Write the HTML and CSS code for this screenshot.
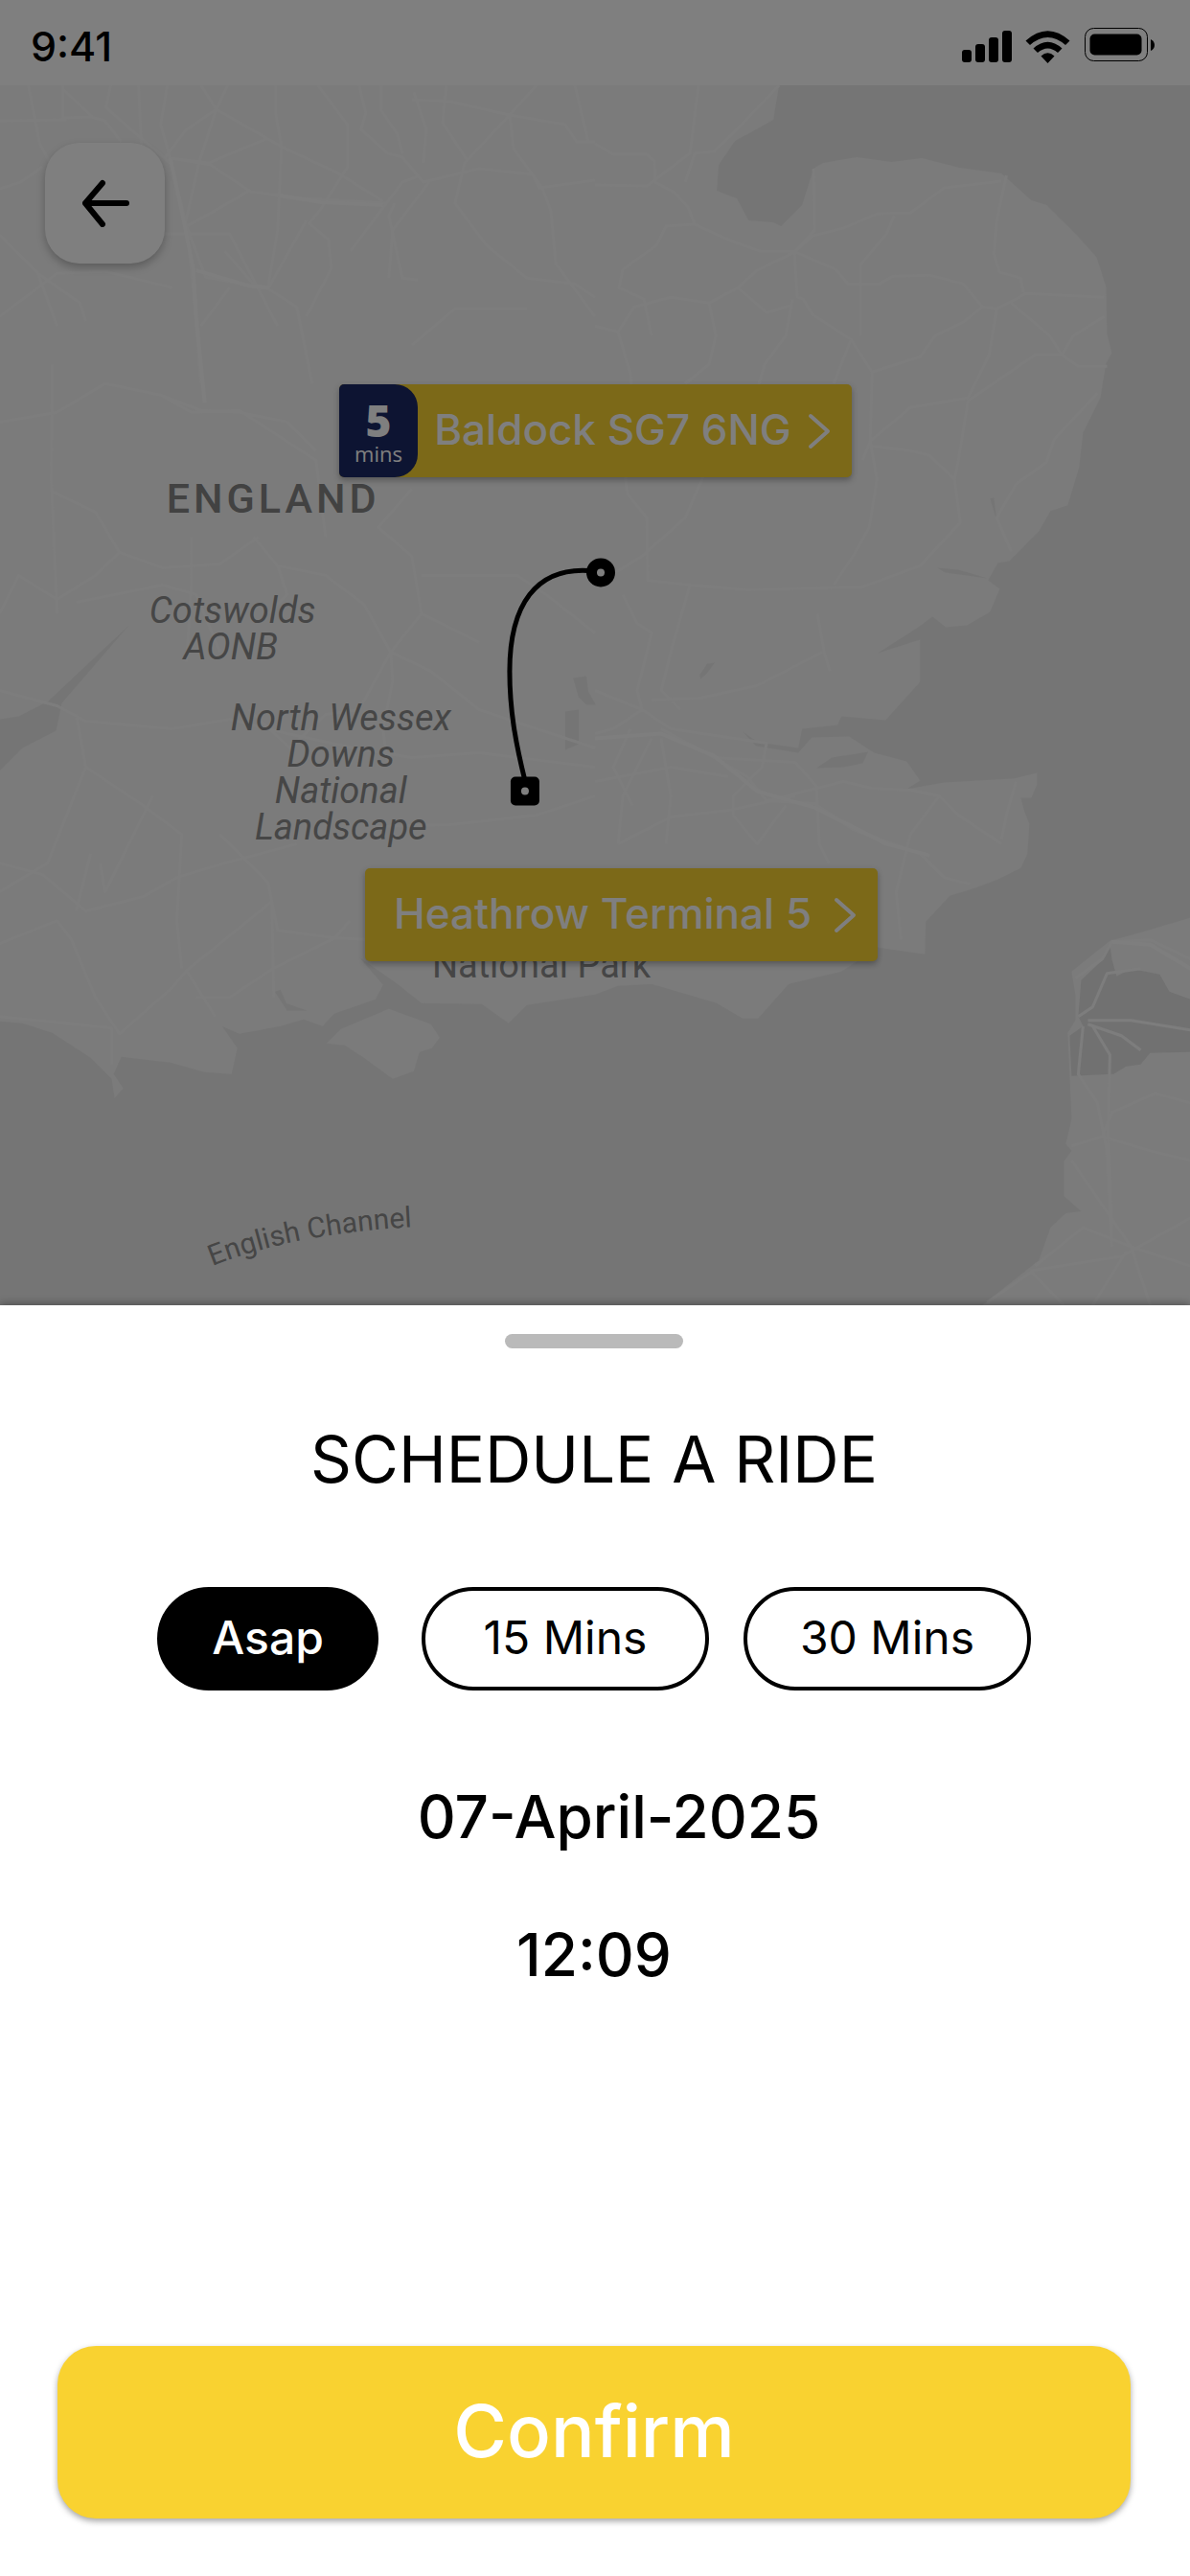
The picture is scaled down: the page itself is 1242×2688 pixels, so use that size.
FILE: index.html
```html
<!DOCTYPE html>
<html lang="en">
<head>
    <meta charset="utf-8">
    <meta name="viewport" content="width=device-width, initial-scale=1">
    <title>Schedule a ride</title>
    <link rel="stylesheet" href="styles.css">
</head>
<body>
    <div class="backdrop">
        <header class="status-bar">
            <span class="clock">9:41</span>
            <svg class="status-icons" viewBox="1005 28 202 40" aria-hidden="true">
                <rect x="1005" y="52" width="10" height="13" rx="3"/>
                <rect x="1019" y="46" width="10" height="19" rx="3"/>
                <rect x="1033" y="39" width="10" height="26" rx="3"/>
                <rect x="1047" y="32" width="10" height="33" rx="3"/>
                <path d="M1071.500 42.500Q1094.500 22 1117.500 42.500L1113 47Q1094.500 31 1076 47Z"/>
                <path d="M1079.500 50.500Q1094.500 37 1109.500 50.500L1105 55Q1094.500 46 1084 55Z"/>
                <path d="M1087.500 58.500Q1094.500 52 1101.500 58.500L1094.500 66Z"/>
                <rect class="battery-case" x="1133.500" y="29.500" width="65" height="34" rx="9"/>
                <rect x="1138.500" y="35.500" width="54" height="22" rx="5"/>
                <path d="M1202 41Q1206 43 1206 47T1202 53Z"/>
            </svg>
        </header>

        <main class="map">
            <svg class="map-canvas" viewBox="0 89 1242 1272" preserveAspectRatio="xMidYMid slice">
                <!-- land -->
                <path class="land" d="M0 89H813L807 125L791 134L767 147L750 172L748 199L769 207L781 230L807 232L815 236L837 214L849 176L859 170L894 164L930 169L962 165L1001 175L1045 181L1076 209L1092 214L1124 246L1144 268L1154 299L1155 348L1160 368L1154 379L1148 415L1130 451L1126 487L1114 527L1096 533L1084 554L1053 585L1041 587L1031 605L1043 614L1033 638L1009 652L987 654L973 643L958 654L916 681L960 667V711L924 751L878 747L874 756L837 760L833 780L791 774L775 763L789 778L833 785L847 769L886 768L912 785L946 794L960 814L946 823L985 816L1057 812L1082 806V818L1076 832H1065L1069 847L1074 859L1072 890L1065 905L1041 917L1017 926L991 934L966 961L965 995L916 988L878 1013L823 1026L791 1062L775 1062L748 1046L680 1026L645 1028L621 1037L550 1048L531 1067L503 1047L440 1046L415 1026L375 998L400 1027L392 1042L349 1057L337 1070L317 1063L293 1070L250 1078L232 1070L248 1093L242 1120L214 1118L178 1108L127 1102L119 1120L129 1135L120 1145L117 1125L95 1103L55 1077L24 1067L0 1065V804L24 780L59 762L65 733L85 710L135 652L69 714L51 731L20 747L0 750Z"/>
                <path class="land" d="M406 1052L450 1068L459 1082L451 1093L438 1097L432 1117L410 1125L380 1103L360 1090L341 1088L356 1073Z"/>
                <path class="land" d="M1242 957L1191 972L1158 981L1118 1013L1122 1037V1064L1114 1077L1116 1122L1118 1167L1112 1193L1118 1200L1110 1211V1247L1128 1263L1112 1265L1096 1280L1084 1314L1025 1361H1242Z"/>
                <path class="marsh" d="M1158 984L1146 1005L1128 1022L1125 1060L1130 1070L1116 1080L1118 1122L1162 1120L1175 1112L1190 1110L1200 1098L1242 1097V1042L1220 1034L1210 1016L1180 1010L1165 1018L1160 1000Z"/>
                <!-- lakes -->
                <path class="water" d="M598 707l14-2 2 16 8 14h-10l-8-8zM590 742l14-2v36l-14 6zM730 704l8-12 8-1-9 12-6 5zM852 801l16-11 38-6-6 12-20 4zM287 1034l6-2 6 14 22 8h-21zM1033 520l4-1 3 24zM978 592l22 2 30 9-44-6z"/>
                <!-- minor roads -->
                <path class="road" d="M30 89L42 150L58 180M66 89V123L95 122L110 126L127 148M66 93L97 122M116 89L111 112L129 128L178 170M145 89L150 200M175 89L168 130L178 165L195 236L202 300L210 400M210 89L226 114L194 136L172 165M238 89L226 114L208 170L193 236M226 114L294 153L352 180L400 210M288 89V118L294 153L290 240L280 300M178 165L218 170L280 144M178 165L220 172L262 200L292 204L300 206L404 212M332 89L363 130V174L335 218L323 233L343 250L346 280L320 330M375 89L382 118L377 135L405 160L420 164L442 190L500 176L556 182L563 196L621 188"/>
                <path class="road" d="M398 89V115L415 140L420 160M432 96L445 135L442 170M430 104L470 106L532 120L590 130L602 148H621M532 120L485 170L475 212L508 256L550 290L600 296L621 310M560 89L532 120L536 155L558 185L566 196L575 220L580 275L621 330M600 89L614 148M466 89L462 128L487 166M0 197L22 190L45 174M0 245L40 285L84 316L90 335M40 285L60 340M172 244H240L290 340M195 236L224 220L262 198M195 236L215 289L280 301M280 301L320 230M280 301L310 320L326 400M430 360L475 322H550"/>
                <path class="road" d="M412 212L406 225L420 290L436 292M448 190L410 240L406 290M366 262L420 190L436 184M0 330L60 285L110 283L180 300M0 126L70 125M210 340L240 300M235 262L268 300"/>
                <path class="road" d="M621 150L640 161L675 161L683 168L684 190L704 201L718 216L725 234L760 250L793 262H828L872 281L885 296H918L932 288L970 287L1005 296L1025 320L1040 322L1060 312L1070 306L1152 310M621 193L675 194L687 185L720 160L729 89M813 89L770 134L745 158L725 160L715 190M725 234L695 236L685 256L650 281L646 300L672 312L680 350M829 263L848 246L880 238L915 223L950 222L985 196L1045 189M849 176L850 240L829 263L832 310L838 312L848 328L888 354L870 400M829 263L790 282L770 300L800 326L827 318M933 225L925 244L898 276V350M1050 183L1040 230L1037 265L1043 284L1065 290L1068 305M1040 322L1032 370L1010 415L950 425L908 460L900 480"/>
                <path class="road" d="M621 340L645 346L658 390L662 440M645 346L662 320L700 310L740 316L770 300M740 316L747 350L740 380L715 400M827 312L820 350L798 380L786 420L750 460L715 540L670 580L621 610M888 354L910 388L960 372L976 350L1005 336L1025 320M910 388L908 460L915 500L907 550L890 580L870 610M908 465L950 470L970 475L996 500L1002 545L960 590L900 612L780 615L720 610L676 605L675 540L655 515L650 480M1055 316L1095 350L1108 370L1080 370L1010 418L1000 480L996 500M1152 330L1120 350L1108 370L1125 382H1155M1145 410L1100 458L1092 482L1060 505L1040 540L1055 575"/>
                <path class="road" d="M55 380L54 500L60 640M0 440L60 430L110 400L168 412L210 428L250 430L300 440L330 470M168 412L200 430L250 428L330 480L340 560M54 512L100 534L125 576L170 592L230 588L270 560M125 576L100 600L60 625L20 600L0 640M80 628L170 610L205 620L230 680M200 560V610L195 690M265 560L290 590L340 600L380 630L408 680L410 710L400 760L405 800M290 590L300 620L280 640M440 640L408 680L375 740L340 745L303 780L260 740M430 510L395 550L430 580L440 640L500 670M440 600H540L570 620L621 660M408 680L450 700L500 740L621 780"/>
                <path class="road" d="M0 720L60 736L90 752L180 760L240 750L300 765L370 780L430 790L500 785L621 800M80 745L90 800L50 900L0 930M90 800L150 840L190 870L185 960L190 1010M230 870L280 920L284 940L290 970L350 978L390 980M284 940L195 1012L225 1060M284 940L286 1040M0 900L45 912L90 950L150 935L185 915L235 900L310 880M195 1012L180 1030L125 1078L100 1040L75 980L60 960L0 984M0 1060L60 1066L117 1072V1110M205 1040H240L285 1010L350 978L365 960M95 890L80 950M105 900L110 930L160 830M621 830L560 850L470 860L390 862"/>
                <path class="road" d="M650 620L665 650L680 660L665 720L670 740L700 760M720 610L700 680L690 720L710 740M670 740L621 720M670 740L640 760L621 765M858 680L790 715L730 728L680 730M866 700L860 680L853 640M700 760L800 775L795 800L765 830V850M690 760L745 790L780 810L800 835L850 838L890 865L960 890L985 915L1012 922M745 790L830 795L852 820L855 880L865 900M680 770L650 830L645 880M690 770L700 830L695 880M645 880L700 852L760 845L830 830M800 835L880 815L910 822L950 824L980 830L1000 850L1045 880M980 830L950 870M1060 815L1050 850L1045 875M950 870L935 930L940 980M621 815L700 800L760 810M658 760L640 800L660 840M765 850L790 880L820 840"/>
                <path class="road" d="M1122 1020L1150 1000L1160 982L1200 980L1242 1000M1125 1060L1140 1050L1155 1015L1190 1010M1135 1064H1180L1242 1074M1135 1068L1170 1080L1190 1095M1130 1070L1125 1120L1145 1150L1155 1200L1160 1300M1140 1070L1158 1100L1156 1180L1160 1280M1242 1150L1205 1140L1160 1160L1150 1185L1118 1195M1150 1185L1200 1200L1242 1210M1118 1210L1180 1300L1200 1361M1080 1320L1130 1280L1180 1300L1242 1320M1075 1325L1170 1310L1242 1270M1075 1325L1110 1361M1175 1305L1140 1361M1030 1358L1078 1325"/>
                <path class="road-main" d="M178 165L190 220L202 280L205 330L214 420M205 282L260 298L282 300M292 204L335 211L400 214M621 770L690 765L745 788L790 825L850 842L925 880L970 892M1160 982L1200 985L1242 1010"/>

                <text class="label-country" x="174" y="535">ENGLAND</text>
                <text class="label-park" x="243" y="650">Cotswolds</text>
                <text class="label-park" x="241" y="688">AONB</text>
                <text class="label-park" x="356" y="761">North Wessex</text>
                <text class="label-park" x="356" y="799">Downs</text>
                <text class="label-park" x="356" y="837">National</text>
                <text class="label-park" x="356" y="875">Landscape</text>
                <text class="label-plain" x="565" y="1019">National Park</text>
                <path id="channel-line" class="guide" d="M222 1320Q310 1285 440 1279"/>
                <text class="label-sea"><textPath href="#channel-line">English Channel</textPath></text>

                <path class="route" d="M614 595C560 592 532 630 532 700C532 740 538 774 548 814"/>
                <circle cx="627" cy="597" r="15"/>
                <circle class="hole" cx="627" cy="597" r="4"/>
                <rect x="533" y="810" width="30" height="30" rx="5"/>
                <circle class="hole" cx="548" cy="825" r="4"/>
            </svg>

            <button class="back" type="button" aria-label="Back">
                <svg viewBox="0 0 50 50"><path d="M47 25H4M22 4L4 25L22 47"/></svg>
            </button>

            <button class="place pickup" type="button">
                <span class="eta"><b>5</b><span>mins</span></span>
                <span class="place-name">Baldock SG7 6NG</span>
                <svg class="chevron" viewBox="0 0 24 38"><path d="M3 3L21 19L3 35"/></svg>
            </button>
            <button class="place dropoff" type="button">
                <span class="place-name">Heathrow Terminal 5</span>
                <svg class="chevron" viewBox="0 0 24 38"><path d="M3 3L21 19L3 35"/></svg>
            </button>
        </main>
    </div>

    <section class="sheet">
        <div class="handle"></div>
        <h1 class="title">SCHEDULE A RIDE</h1>
        <div class="pills">
            <button class="pill pill-now" type="button">Asap</button>
            <button class="pill" type="button">15 Mins</button>
            <button class="pill" type="button">30 Mins</button>
        </div>
        <time class="date" datetime="2025-04-07">07-April-2025</time>
        <time class="time" datetime="12:09">12:09</time>
        <button class="confirm" type="button">Confirm</button>
    </section>
</body>
</html>
```
FILE: styles.css
```css
* {
    box-sizing: border-box;
}
body {
    margin: 0;
    min-height: 100vh;
    display: flex;
    flex-direction: column;
    background-color: white;
    color: black;
    font-family: Inter, "Liberation Sans", sans-serif;
}
button {
    font-family: inherit;
    border: none;
    padding: 0;
    cursor: pointer;
}

/* dimmed screen behind the sheet */
.backdrop {
    position: relative;
    flex: 1;
    display: flex;
    flex-direction: column;
}
.backdrop::after {
    content: "";
    position: absolute;
    inset: 0;
    background-color: rgba(0, 0, 0, 0.5);
}
.status-bar {
    display: flex;
    justify-content: space-between;
    align-items: flex-start;
    height: 89px;
    padding: 28px 36px 0 32px;
}
.clock {
    font-size: 43px;
    line-height: 40px;
    font-weight: 500;
}
.status-icons {
    width: 202px;
    height: 40px;
}
.battery-case {
    fill: none;
    stroke: black;
    stroke-width: 1;
}

.map {
    position: relative;
    flex: 1;
    min-height: 900px;
    overflow: hidden;
    background-color: #ebebeb;
}
.map-canvas {
    position: absolute;
    width: 100%;
    height: 100%;
    font-family: Roboto, sans-serif;
}
.land {
    fill: #f6f6f6;
}
.marsh {
    fill: #e3e3e3;
}
.water {
    fill: #ebebeb;
}
.road {
    fill: none;
    stroke: #fafafa;
    stroke-width: 3;
    stroke-linejoin: round;
}
.road-main {
    fill: none;
    stroke: #fcfcfc;
    stroke-width: 4;
    stroke-linejoin: round;
}
.label-country {
    font-size: 43px;
    font-weight: 500;
    letter-spacing: 4px;
    fill: #848484;
}
.label-park,
.label-plain {
    font-size: 38px;
    text-anchor: middle;
    fill: #8c8c8c;
}
.label-park {
    font-style: italic;
}
.label-sea {
    font-size: 30px;
    fill: #8c8c8c;
}
.guide {
    fill: none;
}
.route {
    fill: none;
    stroke: black;
    stroke-width: 5;
}
.hole {
    fill: white;
}

.back {
    position: absolute;
    top: 60px;
    left: 47px;
    width: 125px;
    height: 126px;
    border-radius: 36px;
    background-color: white;
    box-shadow: 0 4px 8px rgba(0, 0, 0, 0.25);
}
.back svg {
    display: block;
    width: 50px;
    height: 50px;
    margin: 0 auto;
    fill: none;
    stroke: black;
    stroke-width: 6;
    stroke-linecap: round;
    stroke-linejoin: round;
}
.place {
    position: absolute;
    display: flex;
    align-items: center;
    justify-content: space-between;
    width: 535px;
    height: 97px;
    border-radius: 5px;
    background-color: #f9d230;
    color: white;
    box-shadow: 0 3px 6px rgba(0, 0, 0, 0.3);
}
.pickup {
    top: 312px;
    left: 354px;
    padding-right: 22px;
}
.dropoff {
    top: 817px;
    left: 381px;
    padding: 0 22px 0 30px;
}
.place-name {
    padding-bottom: 4px;
    font-size: 44px;
    font-weight: 500;
    white-space: nowrap;
}
.eta {
    display: flex;
    flex-direction: column;
    align-items: center;
    justify-content: center;
    width: 82px;
    height: 97px;
    border-radius: 5px 24px 24px 5px;
    background-color: #1a2864;
    font-family: "Open Sans", sans-serif;
    font-size: 22px;
    line-height: 24px;
}
.eta b {
    font-size: 46px;
    line-height: 46px;
    font-weight: 800;
}
.chevron {
    width: 24px;
    height: 38px;
    fill: none;
    stroke: white;
    stroke-width: 4;
    stroke-linecap: round;
    stroke-linejoin: round;
}

/* bottom sheet */
.sheet {
    position: relative;
    display: flex;
    flex-direction: column;
    align-items: center;
    padding: 30px 62px 60px 60px;
    background-color: white;
    box-shadow: 0 -2px 8px rgba(0, 0, 0, 0.3);
}
.handle {
    width: 186px;
    height: 15px;
    border-radius: 8px;
    background-color: #bababa;
}
.title {
    margin: 76px 0 93px;
    font-size: 67px;
    line-height: 80px;
    font-weight: 400;
}
.pills {
    display: flex;
    gap: 36px;
}
.pill {
    width: 300px;
    height: 108px;
    padding-bottom: 4px;
    border: 4px solid black;
    border-radius: 54px;
    background-color: white;
    color: black;
    font-size: 48px;
}
.pill-now {
    width: 231px;
    margin-right: 9px;
    background-color: black;
    color: white;
    font-weight: 500;
}
.date,
.time {
    font-size: 62px;
    line-height: 72px;
    font-weight: 500;
}
.date {
    margin: 96px 0 72px;
    padding-left: 52px;
}
.confirm {
    align-self: stretch;
    height: 180px;
    margin-top: 372px;
    padding-bottom: 4px;
    border-radius: 40px;
    background-color: #f9d230;
    color: white;
    font-size: 76px;
    font-weight: 500;
    box-shadow: 0 3px 6px rgba(0, 0, 0, 0.35);
}
```
